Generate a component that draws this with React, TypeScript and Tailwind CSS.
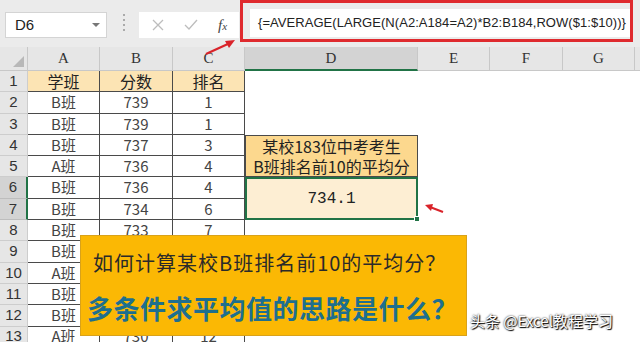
import React from "react";

const rows: [string, string, string][] = [
  ["B班", "739", "1"],
  ["B班", "739", "1"],
  ["B班", "737", "3"],
  ["A班", "736", "4"],
  ["B班", "736", "4"],
  ["B班", "734", "6"],
  ["B班", "733", "7"],
  ["B班", "733", "7"],
  ["A班", "732", "9"],
  ["B班", "732", "9"],
  ["B班", "731", "11"],
  ["A班", "730", "12"],
];

const cjk = "font-['Noto_Sans_CJK_SC','Noto_Sans',sans-serif]";

function FormulaBar() {
  return (
    <div className="flex h-[47px] items-start bg-[#ebebeb] relative">
      {/* Name box */}
      <div className="mt-[12px] ml-[5px] flex h-[26px] w-[102px] items-center justify-between border border-[#d4d4d4] bg-white pl-[9px] pr-[6px]">
        <span className="font-['Liberation_Sans',sans-serif] text-[15px] text-[#222]">D6</span>
        <span className="h-0 w-0 border-x-[4px] border-t-[4px] border-x-transparent border-t-[#777]" />
      </div>
      <div className="mt-[14px] ml-[12px] flex w-[10px] flex-col items-center gap-[3px]">
        <span className="h-[2px] w-[2px] bg-[#aaa]" />
        <span className="h-[2px] w-[2px] bg-[#aaa]" />
        <span className="h-[2px] w-[2px] bg-[#aaa]" />
        <span className="h-[2px] w-[2px] bg-[#aaa]" />
      </div>
      {/* cancel / enter / fx */}
      <div className="mt-[12px] ml-[10px] flex h-[26px] w-[100px] items-center bg-white text-[#b5b5b5]">
        <svg width="14" height="14" viewBox="0 0 14 14" className="ml-[12px]">
          <path d="M2 2 L12 12 M12 2 L2 12" stroke="#bdbdbd" strokeWidth="1.3" />
        </svg>
        <svg width="16" height="14" viewBox="0 0 16 14" className="ml-[18px]">
          <path d="M2 7 L6 11 L14 2" stroke="#bdbdbd" strokeWidth="1.3" fill="none" />
        </svg>
        <span className="ml-[19px] font-['Liberation_Serif',serif] text-[15px] italic text-[#444]">
          f<span className="text-[11px]">x</span>
        </span>
      </div>
      {/* formula input, highlighted */}
      <div className="ml-[1px] flex h-[42px] w-[393px] items-start border-[3px] border-[#df2a2e] bg-[#ebebeb]">
        <div className="ml-[7px] mt-[6px] flex h-[28px] flex-1 items-center overflow-hidden bg-white pl-[8px]">
          <span className="whitespace-nowrap font-['Liberation_Sans',sans-serif] text-[13px] tracking-[0.05px] text-[#222]">
            {"{=AVERAGE(LARGE(N(A2:A184=A2)*B2:B184,ROW($1:$10))}"}
          </span>
        </div>
      </div>
    </div>
  );
}

function Sheet() {
  const letters = ["A", "B", "C", "D", "E", "F", "G"];
  const border = "border-[#4a4a4a]";
  return (
    <div className="grid grid-cols-[28px_72px_73px_72px_173px_72px_73px_72px_1fr] grid-rows-[24px_repeat(13,21.3px)] bg-white">
      {/* corner */}
      <div className="relative border-b border-r border-[#c8c8c8] bg-[#e6e6e6]">
        <span className="absolute bottom-[3px] right-[3px] h-0 w-0 border-b-[11px] border-l-[11px] border-b-[#b8b8b8] border-l-transparent" />
      </div>
      {letters.map((l) => (
        <div
          key={l}
          className={`flex items-center justify-center border-r border-[#c8c8c8] font-['Liberation_Serif',serif] text-[15px] text-[#333] ${
            l === "D" ? "border-b-2 border-b-[#217346] bg-[#d3d3d3]" : "border-b border-b-[#c8c8c8] bg-[#e6e6e6]"
          }`}
        >
          {l}
        </div>
      ))}
      <div className="border-b border-[#c8c8c8] bg-[#e6e6e6]" />

      {/* row 1 */}
      <div className="flex items-center justify-center border-b border-r border-[#cdcdcd] bg-[#e6e6e6] font-['Liberation_Sans',sans-serif] text-[15px] text-[#333]">
        1
      </div>
      {["学班", "分数", "排名"].map((h) => (
        <div
          key={h}
          className={`flex items-center justify-center border-b border-r ${border} bg-[#fce4b4] ${cjk} text-[16px] text-[#222]`}
        >
          {h}
        </div>
      ))}
      <div className="col-span-5" />

      {rows.map((r, i) => {
        const n = i + 2;
        const sel = n === 6 || n === 7;
        return (
          <React.Fragment key={n}>
            <div
              className={`flex items-center justify-center border-b border-r font-['Liberation_Sans',sans-serif] text-[15px] text-[#333] ${
                sel ? "border-r-2 border-b-[#bdbdbd] border-r-[#217346] bg-[#d3d3d3]" : "border-[#cdcdcd] bg-[#e6e6e6]"
              }`}
            >
              {n}
            </div>
            {r.map((c, j) => (
              <div
                key={j}
                className={`flex items-center justify-center border-b border-r ${border} ${cjk} text-[15px] text-[#444]`}
              >
                {c}
              </div>
            ))}
            {n === 4 && (
              <div
                className={`row-span-2 flex flex-col items-center justify-center border ${border} bg-[#fcd88e] ${cjk} text-[16px] leading-[20px] text-[#222]`}
              >
                <span>某校183位中考考生</span>
                <span>B班排名前10的平均分</span>
              </div>
            )}
            {n === 6 && (
              <div className="relative row-span-2 flex items-center justify-center border-2 border-[#217346] bg-[#fdeed3] font-['Liberation_Mono',monospace] text-[16px] text-[#222]">
                734.1
                <span className="absolute -bottom-[4px] -right-[4px] h-[6px] w-[6px] border border-white bg-[#217346]" />
              </div>
            )}
            {(n < 4 || n > 7) && <div />}
            <div className="col-span-4" />
          </React.Fragment>
        );
      })}
    </div>
  );
}

export default function App() {
  return (
    <div className="relative h-[342px] w-[640px] overflow-hidden bg-white">
      <FormulaBar />
      <Sheet />

      {/* arrow to the formula */}
      <svg className="absolute left-[200px] top-[34px]" width="40" height="26" viewBox="0 0 40 26">
        <path d="M6 20 L30 9" stroke="#d9232a" strokeWidth="2.2" fill="none" />
        <path d="M35 6 L25 7 L29 14 Z" fill="#d9232a" />
      </svg>
      {/* arrow to the result */}
      <svg className="absolute left-[423px] top-[201px]" width="24" height="16" viewBox="0 0 24 16">
        <path d="M7 6 L20 11" stroke="#d9232a" strokeWidth="2" fill="none" />
        <path d="M2 4 L10 3 L8 10 Z" fill="#d9232a" />
      </svg>

      {/* title overlay */}
      <div className="absolute left-[80px] top-[235px] flex h-[101px] w-[387px] flex-col border border-[#d9a21a] bg-[#fbb804] pl-[12px]">
        <div className={`mt-[14px] ${cjk} text-[20px] leading-[26px] tracking-[1px] text-[#2a2a2a]`}>
          如何计算某校B班排名前10的平均分？
        </div>
        <div className={`mt-[16px] -ml-[6px] ${cjk} text-[26px] font-bold leading-[32px] tracking-[0.5px] text-[#1e6f8e]`}>
          多条件求平均值的思路是什么？
        </div>
      </div>

      {/* watermark */}
      <div
        className={`absolute left-[470px] top-[310px] ${cjk} text-[15px] text-white [text-shadow:0_0_2px_#000,1px_1px_1px_#000]`}
      >
        头条 @Excel教程学习
      </div>
    </div>
  );
}
